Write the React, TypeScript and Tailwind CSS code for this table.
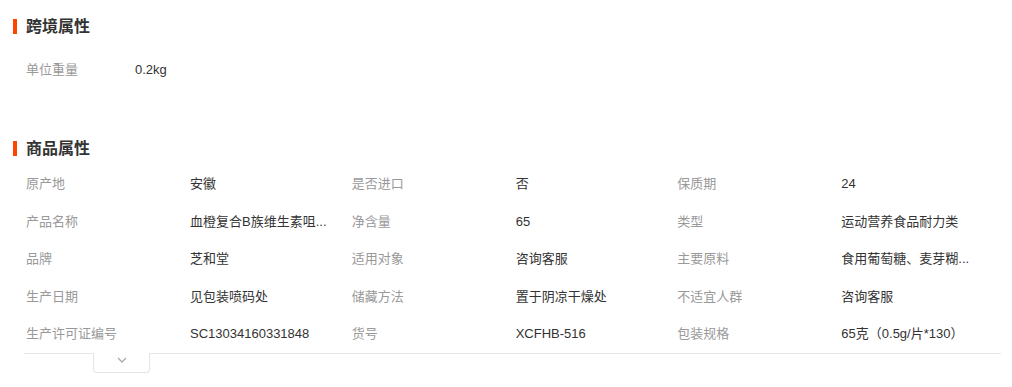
import React from 'react'

const attrs: [string, string][] = [
  ['原产地', '安徽'],
  ['是否进口', '否'],
  ['保质期', '24'],
  ['产品名称', '血橙复合B族维生素咀...'],
  ['净含量', '65'],
  ['类型', '运动营养食品耐力类'],
  ['品牌', '芝和堂'],
  ['适用对象', '咨询客服'],
  ['主要原料', '食用葡萄糖、麦芽糊...'],
  ['生产日期', '见包装喷码处'],
  ['储藏方法', '置于阴凉干燥处'],
  ['不适宜人群', '咨询客服'],
  ['生产许可证编号', 'SC13034160331848'],
  ['货号', 'XCFHB-516'],
  ['包装规格', '65克（0.5g/片*130）'],
]

function SectionTitle({ title }: { title: string }) {
  return (
    <div className="flex items-center h-[17px] pl-[13px]">
      <span className="w-[4px] h-[15px] bg-[#ff4400]" />
      <span className="ml-[9px] text-[16px] font-bold text-[#333] leading-[17px]">{title}</span>
    </div>
  )
}

export default function App() {
  return (
    <div
      className="w-[1012px] h-[387px] bg-white overflow-hidden text-[13px]"
      style={{ fontFamily: '"Liberation Sans", "Noto Sans CJK SC", sans-serif' }}
    >
      {/* 跨境属性 */}
      <div className="pt-[18px]">
        <SectionTitle title="跨境属性" />
        <div className="mt-[25px] pl-[26px] flex h-[20px] items-center">
          <span className="w-[109px] text-[#999]">单位重量</span>
          <span className="text-[#333]">0.2kg</span>
        </div>
      </div>

      {/* 商品属性 */}
      <div className="mt-[60px]">
        <SectionTitle title="商品属性" />
        <div className="mt-[8px] ml-[24px] w-[977px] grid grid-cols-3 border-b border-[#e8e8e8]">
          {attrs.map(([label, value]) => (
            <div key={label} className="flex items-center h-[37.5px] pl-[2px]">
              <span className="w-[164px] shrink-0 text-[#999]">{label}</span>
              <span className="whitespace-nowrap text-[#333]">{value}</span>
            </div>
          ))}
        </div>
        <div className="relative z-10 -mt-px ml-[93px] w-[57px] h-[20px] bg-white border-x border-b border-[#e5e5e5] rounded-b-[4px] flex items-center justify-center">
          <svg width="10" height="6" viewBox="0 0 10 6" className="-mt-[4px]">
            <polyline points="1,1 5,5 9,1" fill="none" stroke="#a8a8a8" strokeWidth="1.3" />
          </svg>
        </div>
      </div>
    </div>
  )
}
